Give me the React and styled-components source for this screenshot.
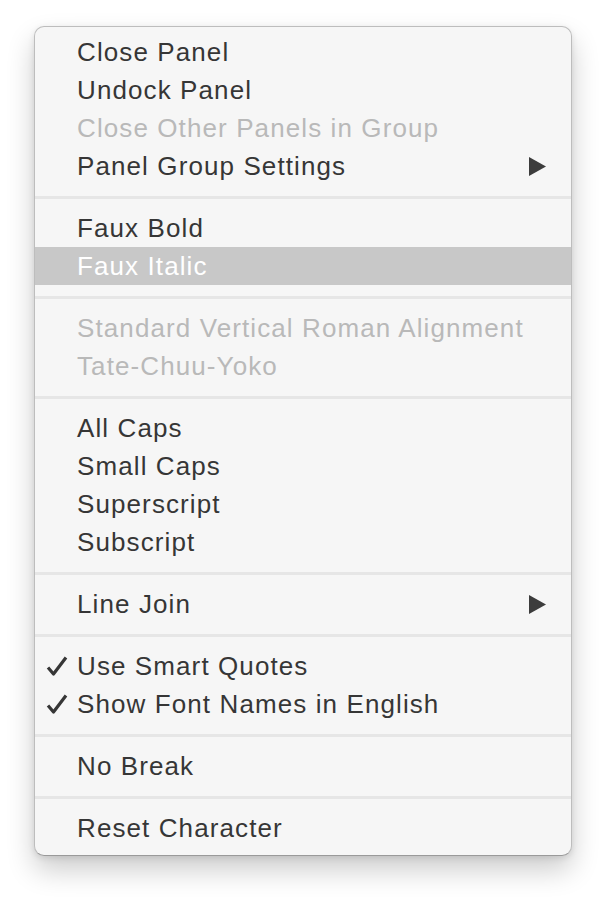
import React from 'react'
import styled, { createGlobalStyle } from 'styled-components'

const GlobalStyle = createGlobalStyle`
  html, body {
    margin: 0;
    padding: 0;
    background: #ffffff;
  }
`

const Page = styled.div`
  min-height: 100vh;
  box-sizing: border-box;
  padding: 26px 0 42px 34px;
  font-family: "Liberation Sans", Arial, sans-serif;
`

const Menu = styled.div`
  width: 538px;
  box-sizing: border-box;
  background: #f6f6f6;
  border: 1px solid #bdbdbd;
  border-bottom-color: #9a9a9a;
  border-radius: 10px;
  padding: 6px 0 8px;
  box-shadow: 0 14px 28px rgba(0, 0, 0, 0.2), 0 2px 6px rgba(0, 0, 0, 0.1);
  overflow: hidden;
`

const Item = styled.div`
  position: relative;
  height: 38px;
  display: flex;
  align-items: center;
  padding-left: 42px;
  padding-right: 24px;
  font-size: 26px;
  letter-spacing: 1.1px;
  color: ${p => (p.$active ? '#ffffff' : p.$disabled ? '#b9b9b9' : '#363636')};
  background: ${p => (p.$active ? '#c8c8c8' : 'transparent')};
`

const Label = styled.span`
  flex: 1;
  white-space: nowrap;
`

const Check = styled.span`
  position: absolute;
  left: 11px;
  top: 0;
  height: 38px;
  display: flex;
  align-items: center;
`

const Separator = styled.div`
  height: 24px;
  display: flex;
  align-items: center;
  &::after {
    content: '';
    flex: 1;
    height: 3px;
    background: #e6e6e6;
  }
`

const Arrow = () => (
  <svg width="19" height="21" viewBox="0 0 19 21">
    <polygon points="1,1 18,10.5 1,20" fill="#3c3c3c" />
  </svg>
)

const CheckMark = () => (
  <svg width="22" height="22" viewBox="0 0 22 22">
    <path d="M2 12.5 L7.5 19 L20 2.5" fill="none" stroke="#363636" strokeWidth="3.2" strokeLinejoin="round" />
  </svg>
)

const groups = [
  [
    { label: 'Close Panel' },
    { label: 'Undock Panel' },
    { label: 'Close Other Panels in Group', disabled: true },
    { label: 'Panel Group Settings', submenu: true },
  ],
  [{ label: 'Faux Bold' }, { label: 'Faux Italic', active: true }],
  [
    { label: 'Standard Vertical Roman Alignment', disabled: true },
    { label: 'Tate-Chuu-Yoko', disabled: true },
  ],
  [{ label: 'All Caps' }, { label: 'Small Caps' }, { label: 'Superscript' }, { label: 'Subscript' }],
  [{ label: 'Line Join', submenu: true }],
  [
    { label: 'Use Smart Quotes', checked: true },
    { label: 'Show Font Names in English', checked: true },
  ],
  [{ label: 'No Break' }],
  [{ label: 'Reset Character' }],
]

export default function App() {
  return (
    <Page>
      <GlobalStyle />
      <Menu>
        {groups.map((group, gi) => (
          <React.Fragment key={gi}>
            {gi > 0 && <Separator />}
            {group.map(item => (
              <Item key={item.label} $active={item.active} $disabled={item.disabled}>
                {item.checked && (
                  <Check>
                    <CheckMark />
                  </Check>
                )}
                <Label>{item.label}</Label>
                {item.submenu && <Arrow />}
              </Item>
            ))}
          </React.Fragment>
        ))}
      </Menu>
    </Page>
  )
}
